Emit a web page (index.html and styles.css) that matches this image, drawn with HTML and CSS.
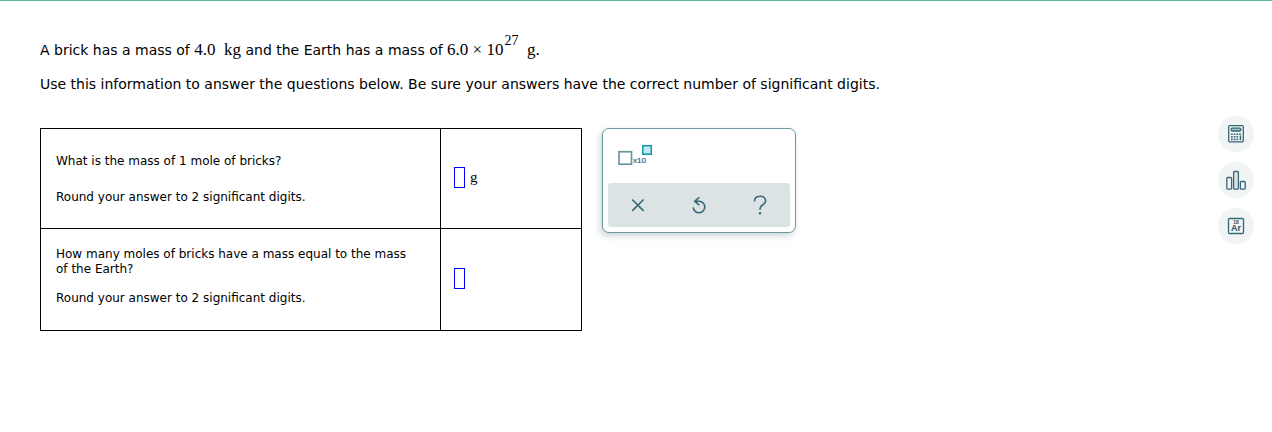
FILE: index.html
```html
<!DOCTYPE html>
<html lang="en">
<head>
    <meta charset="UTF-8">
    <meta name="viewport" content="width=device-width, initial-scale=1.0">
    <title>Significant Digits</title>
    <link rel="stylesheet" href="styles.css">
</head>
<body>
    <div class="page">
        <main class="content">
            <div class="intro">
                <p>A brick has a mass of <span class="math">4.0&nbsp; kg</span> and the Earth has a mass of <span class="math">6.0 × 10<sup>27</sup>&nbsp; g.</span></p>
                <p>Use this information to answer the questions below. Be sure your answers have the correct number of significant digits.</p>
            </div>

            <div class="work">
                <table class="questions">
                    <tbody>
                        <tr>
                            <td class="question short">
                                <p><label for="molesMass">What is the mass of 1 mole of bricks?</label></p>
                                <p>Round your answer to 2 significant digits.</p>
                            </td>
                            <td class="answer">
                                <div class="field"><input type="text" id="molesMass"><span class="unit">g</span></div>
                            </td>
                        </tr>
                        <tr>
                            <td class="question">
                                <p><label for="earthMoles">How many moles of bricks have a mass equal to the mass of the Earth?</label></p>
                                <p>Round your answer to 2 significant digits.</p>
                            </td>
                            <td class="answer">
                                <div class="field"><input type="text" id="earthMoles"></div>
                            </td>
                        </tr>
                    </tbody>
                </table>

                <div class="palette">
                    <button type="button" class="sci" aria-label="Scientific notation">
                        <svg width="36" height="22" viewBox="0 0 36 22">
                            <rect x="1" y="7.75" width="12.5" height="12.5" fill="#fff" stroke="#6f959f" stroke-width="1.7"/>
                            <rect x="24.8" y="1.7" width="8.5" height="8.5" fill="#c0eaf2" stroke="#1293ae" stroke-width="1.5"/>
                            <text x="15" y="19" class="sci-text">x10</text>
                        </svg>
                    </button>
                    <div class="actions">
                        <button type="button" aria-label="Clear">
                            <svg width="24" height="24" viewBox="0 0 24 24"><path d="M6.2 6.5l11.4 11.4M17.6 6.5l-11.4 11.4"/></svg>
                        </button>
                        <button type="button" aria-label="Reset">
                            <svg width="24" height="24" viewBox="0 0 24 24"><path d="M12.3 4.3L7.7 8.2l4.5 3.9M8 8.2h4.2a5.8 5.8 0 1 1-6 6.2"/></svg>
                        </button>
                        <button type="button" aria-label="Help">
                            <svg width="24" height="24" viewBox="0 0 24 24"><path d="M6.4 8.5c0-3.4 2.4-5.3 5.7-5.3 3.3 0 5.5 2 5.5 4.8 0 4.2-5.6 3.2-5.6 7.7v1"/><circle cx="12" cy="20.3" r="1.2" class="dot"/></svg>
                        </button>
                    </div>
                </div>
            </div>
        </main>

        <aside class="tools">
            <button type="button" aria-label="Calculator">
                <svg width="20" height="20" viewBox="0 0 20 20">
                    <rect x="2.7" y="1.7" width="14.6" height="16.1" rx="1"/>
                    <rect x="5.2" y="4.2" width="9.6" height="2.8" rx="1" fill="#a9bdc4"/>
                    <path d="M5 10.2h10M5 12.8h7.5M5 15.4h7.5" stroke-width="1.6" stroke-dasharray="1.7 1"/>
                    <path d="M14.4 11.5v4.7" stroke-width="1.5"/>
                </svg>
            </button>
            <button type="button" aria-label="Bar chart">
                <svg width="20" height="20" viewBox="0 0 20 20">
                    <rect x=".8" y="7.5" width="4.8" height="11.7" rx="1"/>
                    <rect x="7.6" y="1.5" width="4.8" height="17.7" rx="1" fill="#dce4e8"/>
                    <rect x="14.4" y="11.5" width="4.8" height="7.7" rx="1"/>
                </svg>
            </button>
            <button type="button" aria-label="Periodic table">
                <svg width="20" height="20" viewBox="0 0 20 20">
                    <rect x="2.5" y="2.5" width="15" height="15" rx="1"/>
                    <text x="10" y="7.7" class="atomic">18</text>
                    <text x="10" y="15" class="symbol">Ar</text>
                </svg>
            </button>
        </aside>
    </div>
</body>
</html>
```
FILE: styles.css
```css
* {
    box-sizing: border-box;
}

body {
    margin: 0;
    border-top: 1px solid #5bbd91;
    background-color: #fff;
    color: #000;
    font-family: Verdana, "DejaVu Sans", sans-serif;
    font-size: 14px;
}

p {
    margin: 0;
}

button {
    padding: 0;
    border: none;
    background: none;
    cursor: pointer;
}

svg {
    display: block;
}

.page {
    display: flex;
    justify-content: space-between;
    padding: 32px 18px 32px 40px;
}

.intro {
    line-height: 34px;
}

.math {
    font-family: "Liberation Serif", serif;
    font-size: 17px;
}

.math sup {
    margin-left: 1px;
    font-size: 14px;
    line-height: 0;
    vertical-align: 10px;
}

.work {
    display: flex;
    align-items: flex-start;
    gap: 20px;
    margin-top: 27px;
}

.questions {
    width: 542px;
    border-collapse: collapse;
    table-layout: fixed;
    font-size: 12px;
    line-height: 15px;
}

.questions td {
    border: 1px solid #000;
}

.question {
    width: 400px;
    padding: 18px 20px 24px 15px;
}

.question p + p {
    margin-top: 14px;
}

.short {
    padding: 21px 20px 20px 15px;
    line-height: 22px;
}

.answer {
    padding: 0 13px 2px;
}

.field {
    display: flex;
    align-items: center;
    gap: 5px;
}

.field input {
    width: 11px;
    height: 21px;
    padding: 0;
    border: 1px solid #00f;
    outline: none;
}

.unit {
    font-family: "Liberation Serif", serif;
    font-size: 15px;
}

/* Answer palette */
.palette {
    width: 194px;
    padding: 15px 5px 5px;
    border: 1px solid #6f979f;
    border-radius: 7px;
    background-color: #fff;
    box-shadow: -2px 3px 6px rgba(60, 100, 110, 0.25);
}

.sci {
    display: block;
    margin: 0 0 17px 10px;
}

.sci-text {
    font-family: "Liberation Sans", sans-serif;
    font-size: 8px;
    fill: #2f6270;
    stroke: #2f6270;
    stroke-width: 0.2;
}

.actions {
    display: flex;
    justify-content: space-around;
    align-items: center;
    height: 44px;
    border-radius: 3px;
    background-color: #dbe3e4;
}

.actions svg {
    fill: none;
    stroke: #386775;
    stroke-width: 1.6;
}

.actions .dot {
    fill: #386775;
    stroke: none;
}

/* Round buttons on the right */
.tools {
    display: flex;
    flex-direction: column;
    gap: 10px;
    padding-top: 83px;
}

.tools button {
    display: flex;
    align-items: center;
    justify-content: center;
    width: 36px;
    height: 36px;
    border-radius: 50%;
    background-color: #f0f4f5;
}

.tools svg {
    fill: none;
    stroke: #386775;
    stroke-width: 1.3;
}

.tools text {
    fill: #245260;
    stroke: none;
    font-family: "Liberation Sans", sans-serif;
    font-weight: bold;
    text-anchor: middle;
}

.atomic {
    font-size: 5px;
}

.symbol {
    font-size: 9px;
}
```
